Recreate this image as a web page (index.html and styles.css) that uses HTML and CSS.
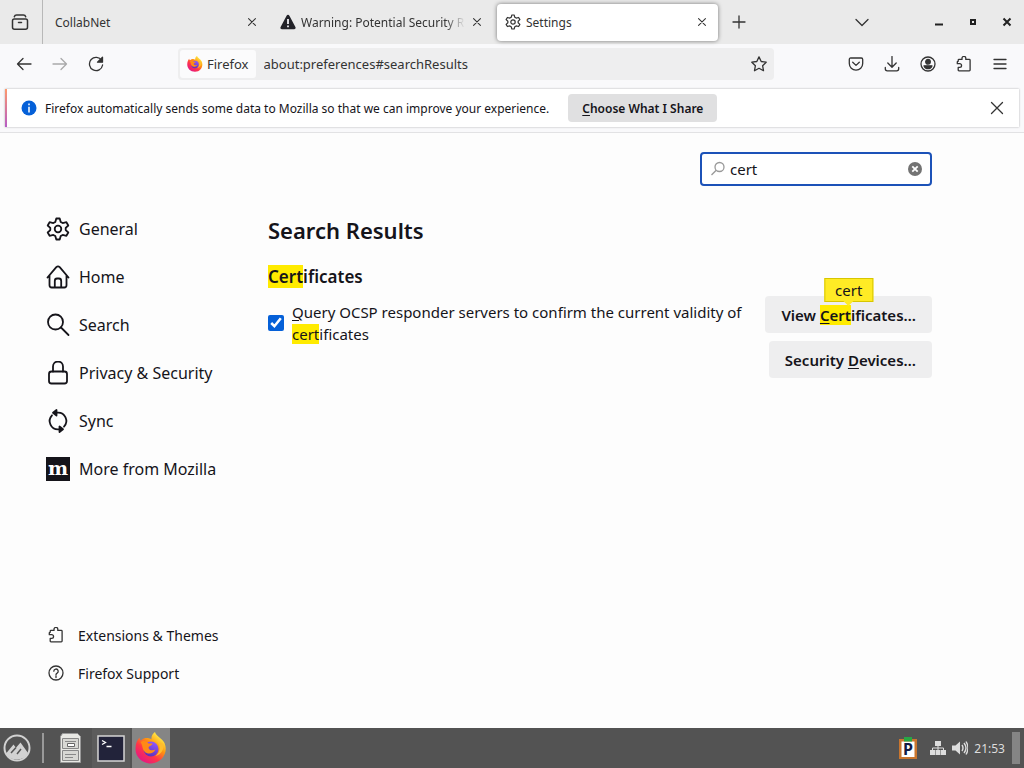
FILE: index.html
```html
<!DOCTYPE html>
<html lang="en">
<head>
    <meta charset="UTF-8">
    <meta name="viewport" content="width=device-width, initial-scale=1.0">
    <title>Settings</title>
    <link rel="stylesheet" href="styles.css">
</head>
<body>
    <!-- shared icons -->
    <svg class="sprite" aria-hidden="true">
        <symbol id="close" viewBox="0 0 16 16"><path d="M2.500 2.500l11 11M13.500 2.500l-11 11"/></symbol>
        <symbol id="gear" viewBox="0 0 24 24">
            <path d="M10.300 1.500h3.400l1 3.400 2 1.200 3.700-.9 1.900 3.300-2.600 2.400v2.200l2.600 2.400-1.900 3.300-3.700-.9-2 1.200-1 3.400h-3.400l-1-3.400-2-1.200-3.700.9-1.900-3.300 2.600-2.400v-2.200L1.700 8.500l1.900-3.300 3.700.9 2-1.200z"/>
            <circle cx="12" cy="12" r="3.300"/>
        </symbol>
        <symbol id="puzzle" viewBox="0 0 16 16">
            <path d="M2.200 5.300V4.200q0-.8.800-.8h3V2.300a1.900 1.900 0 0 1 3.800 0v1.100h3.500q.8 0 .8.800v9.800q0 .8-.8.800H3q-.8 0-.8-.8v-2.600h1.500a1.600 1.600 0 0 0 0-3.700H1.300V5.800q0-.5.900-.5z"/>
        </symbol>
        <symbol id="firefox" viewBox="0 0 32 32">
            <defs>
                <linearGradient id="fox-body" x1=".85" y1=".1" x2=".2" y2=".95">
                    <stop offset="0" stop-color="#fff44f"/>
                    <stop offset=".35" stop-color="#ff980e"/>
                    <stop offset=".65" stop-color="#ff3647"/>
                    <stop offset="1" stop-color="#e31587"/>
                </linearGradient>
                <linearGradient id="fox-globe" x1=".7" y1="0" x2=".3" y2="1">
                    <stop offset="0" stop-color="#9059ff"/>
                    <stop offset="1" stop-color="#5b30b5"/>
                </linearGradient>
            </defs>
            <path fill="url(#fox-body)" d="M20 0c1 4 7 6 9.500 11 4 9-2 20-13.500 20.500C7 31.500.5 25 .5 17 .5 12 2 8 4.500 5.500c0 1.500.5 2.500 1.500 3 2-2 4-2.500 5.500-2.500 2 0 4 .5 5 1.500C16 4.500 17.500 1.500 20 0z"/>
            <circle cx="16" cy="17" r="7.500" fill="url(#fox-globe)"/>
            <path fill="#ff8a16" d="M5.500 10c3-2 6.500-1 8 1.500h4c-.2 2-3.500 2.500-4 4 .5 3 4 3.500 7 2-2 4.500-8 5.500-11 2C7 17 8 13.500 5.500 10z"/>
            <path fill="#ffbd2f" d="M21 8c5 4 5 12-.5 16 6-1.500 9-7 7.500-12.500-1 0-2-.5-2.500-1.500 0 1 0 2-.5 2.500C24.500 10.500 23 9 21 8z"/>
        </symbol>
    </svg>

    <header class="browser">
        <div class="tab-bar">
            <button class="view-button" aria-label="Firefox View">
                <svg class="icon" viewBox="0 0 18 18"><path d="M3.300 3.800q.5-1.800 2.300-1.800h6.800q1.800 0 2.300 1.800M3.300 6h11.400q1.800 0 1.800 1.800v6.400q0 2-2 2h-11q-2 0-2-2V7.800Q1.500 6 3.300 6zM7.500 9.500h3"/></svg>
            </button>
            <div class="tab">
                <span class="tab-title">CollabNet</span>
                <button class="tab-close" aria-label="Close tab"><svg class="icon"><use href="#close"/></svg></button>
            </div>
            <div class="tab">
                <svg class="tab-icon warning" viewBox="0 0 16 16"><path fill="#222228" d="M8 .8q.9 0 1.400.9l6 11.300q.8 2-1.200 2.200H1.800Q-.2 15 .6 13l6-11.300Q7.100.8 8 .8z"/><path stroke="#f0f0f4" stroke-width="1.800" d="M8 5v5M8 11.500v1.800"/></svg>
                <span class="tab-title">Warning: Potential Security Risk</span>
                <button class="tab-close" aria-label="Close tab"><svg class="icon"><use href="#close"/></svg></button>
            </div>
            <div class="tab active">
                <svg class="tab-icon icon"><use href="#gear"/></svg>
                <span class="tab-title">Settings</span>
                <button class="tab-close" aria-label="Close tab"><svg class="icon"><use href="#close"/></svg></button>
            </div>
            <button class="new-tab" aria-label="New tab"><svg class="icon" viewBox="0 0 14 14"><path d="M7 1v12M1 7h12"/></svg></button>
            <button class="all-tabs" aria-label="List all tabs"><svg class="icon" viewBox="0 0 14 14"><path d="M1 4.500l6 6 6-6"/></svg></button>
            <div class="window-buttons">
                <button aria-label="Minimize"><svg viewBox="0 0 10 10"><path d="M1 7.500h8" stroke="#222" stroke-width="2"/></svg></button>
                <button aria-label="Maximize"><svg viewBox="0 0 10 10"><path d="M3 3h4v4H3z" fill="none" stroke="#222" stroke-width="2"/></svg></button>
                <button aria-label="Close"><svg viewBox="0 0 10 10"><path d="M1.500 1.500l7 7M8.500 1.500l-7 7" stroke="#222" stroke-width="2"/></svg></button>
            </div>
        </div>

        <div class="toolbar">
            <button aria-label="Back"><svg class="icon" viewBox="0 0 16 16"><path d="M15 8H1.500M7 2.500L1.500 8 7 13.500"/></svg></button>
            <button aria-label="Forward" disabled><svg class="icon" viewBox="0 0 16 16"><path d="M1 8h13.500M9 2.500L14.500 8 9 13.500"/></svg></button>
            <button aria-label="Reload"><svg class="icon" viewBox="0 0 16 16"><path d="M13.700 4.500A6.600 6.600 0 1 0 14.600 9"/><path d="M14.500 1.200v5h-5z" fill="#333"/></svg></button>
            <div class="urlbar">
                <button class="identity"><svg class="fox"><use href="#firefox"/></svg>Firefox</button>
                <input class="url" type="text" aria-label="Address" value="about:preferences#searchResults">
                <button class="star" aria-label="Bookmark"><svg class="icon" viewBox="0 0 16 16"><path d="M8 .9l2.200 4.600 5 .7-3.600 3.500.9 5L8 12.300l-4.500 2.400.9-5L.8 6.200l5-.7z"/></svg></button>
            </div>
            <button aria-label="Pocket"><svg class="icon" viewBox="0 0 16 16"><path d="M2.700 2h10.600q1.400 0 1.400 1.400v4.100a6.700 6.700 0 0 1-13.400 0V3.400Q1.300 2 2.700 2zM4.700 6.300L8 9.400l3.300-3.100"/></svg></button>
            <button aria-label="Downloads"><svg class="icon" viewBox="0 0 16 16"><path d="M8 .5v10.500M3.800 7L8 11.200 12.200 7M1.300 11.500v1.300q0 2 2 2h9.400q2 0 2-2v-1.300"/></svg></button>
            <button aria-label="Account"><svg class="icon" viewBox="0 0 16 16"><circle cx="8" cy="8" r="7"/><circle cx="8" cy="5.800" r="2.300" fill="#333"/><path fill="#333" d="M4 9.800h8q-1 2.900-4 2.900t-4-2.900z"/></svg></button>
            <button aria-label="Extensions"><svg class="icon"><use href="#puzzle"/></svg></button>
            <button aria-label="Menu"><svg class="icon" viewBox="0 0 16 16"><path d="M2 3.500h12M2 8h12M2 12.500h12"/></svg></button>
        </div>

        <div class="notice">
            <svg class="info" viewBox="0 0 16 16"><circle cx="8" cy="8" r="7.500" fill="#0560d8"/><path d="M8 3.500v1.700M8 6.700v5.800" stroke="#fff" stroke-width="1.500"/></svg>
            <span>Firefox automatically sends some data to Mozilla so that we can improve your experience.</span>
            <button class="share"><u>C</u>hoose What I Share</button>
            <button class="dismiss" aria-label="Dismiss"><svg class="icon"><use href="#close"/></svg></button>
        </div>
    </header>

    <div class="page">
        <aside class="sidebar">
            <nav class="categories">
                <a href="#general"><svg class="icon"><use href="#gear"/></svg>General</a>
                <a href="#home"><svg class="icon" viewBox="0 0 24 24"><path d="M1.500 12.500L10.300 2.200q1.700-1.600 3.400 0l8.800 10.300M3.500 10.500v9.800q0 2.200 2.200 2.200h12.600q2.200 0 2.200-2.200v-9.800M8.800 22v-6q0-2.500 2.200-2.500h2q2.200 0 2.200 2.500v6"/></svg>Home</a>
                <a href="#search"><svg class="icon" viewBox="0 0 24 24"><circle cx="9.500" cy="9" r="7.500"/><path d="M15 14.500l7.500 7.500"/></svg>Search</a>
                <a href="#privacy"><svg class="icon" viewBox="0 0 24 24"><rect x="3" y="10.500" width="18" height="12" rx="2.500"/><path d="M7 10.500v-5a5 5 0 0 1 10 0v5"/></svg>Privacy &amp; Security</a>
                <a href="#sync"><svg class="icon" viewBox="0 0 24 24"><path d="M9 3.700h2.500a8.300 8.300 0 0 1 6.500 14M15 20.300h-2.500A8.300 8.300 0 0 1 6 6.300"/><path fill="#15141a" d="M10.500 1v5.600L7 3.700zM13.500 17.500V23l3.500-2.700z"/></svg>Sync</a>
                <a href="#more"><svg viewBox="0 0 24 24"><path fill="#15141a" d="M0 0h24v24H0z"/><text class="m-logo" x="12" y="18" text-anchor="middle">m</text></svg>More from Mozilla</a>
            </nav>
            <nav class="links">
                <a href="#addons"><svg class="icon"><use href="#puzzle"/></svg>Extensions &amp; Themes</a>
                <a href="#support"><svg class="icon" viewBox="0 0 16 16"><circle cx="8" cy="8" r="7"/><path d="M5.800 6.200a2.200 2.200 0 1 1 3.300 1.900q-1.100.6-1.100 1.700M8 11v1.500"/></svg>Firefox Support</a>
            </nav>
        </aside>

        <main class="content">
            <div class="search-box">
                <svg class="magnifier" viewBox="0 0 16 16"><circle cx="9.500" cy="6" r="4.500"/><path d="M6.200 9.300L1.500 14"/></svg>
                <input type="text" aria-label="Find in Settings" value="cert">
                <button class="clear" aria-label="Clear"><svg viewBox="0 0 14 14"><circle cx="7" cy="7" r="7" fill="#737373"/><path d="M4.300 4.300l5.400 5.400M9.700 4.300L4.300 9.700" stroke="#fff" stroke-width="1.800"/></svg></button>
            </div>
            <h1>Search Results</h1>
            <h2><mark>Cert</mark>ificates</h2>
            <div class="setting">
                <div class="ocsp">
                    <input type="checkbox" id="ocsp" checked>
                    <label for="ocsp"><u>Q</u>uery OCSP responder servers to confirm the current validity of <mark>cert</mark>ificates</label>
                </div>
                <div class="actions">
                    <div class="found">
                        <button class="action">View <mark><u>C</u>ert</mark>ificates…</button>
                        <span class="bubble">cert</span>
                    </div>
                    <button class="action">Security <u>D</u>evices…</button>
                </div>
            </div>
        </main>
    </div>

    <footer class="taskbar">
        <button class="start" aria-label="Menu"><svg viewBox="0 0 28 28"><circle cx="14" cy="14" r="12.500" fill="none" stroke="#d2d2d2" stroke-width="2"/><path fill="#d2d2d2" d="M3 19.500l7.500-9 2.500 3.200 4.500-5.200 7.500 10.500q-3 6.500-11 6.500T3 19.500z"/><path d="M8 19l5-5.500M14 20l4-5" stroke="#555" stroke-width="1.500"/></svg></button>
        <span class="divider"></span>
        <button class="task" aria-label="Files"><svg viewBox="0 0 32 32"><path fill="#e8e8e4" stroke="#999" d="M7.500 1.500h15l3 3v26h-20v-26z"/><path fill="#d8d8d4" stroke="#888" d="M7.500 6.500h16v10h-16zM7.500 18.500h16v10h-16z"/><path stroke="#888" d="M10 9.500h11M10 22.500h11M10 25.500h8"/><path fill="#fff" stroke="#666" d="M12.500 11.500h7v3h-7z"/></svg></button>
        <button class="task open" aria-label="Terminal"><svg viewBox="0 0 32 32"><path fill="#22233a" stroke="#d5d5d5" stroke-width="1.500" d="M3 4h26v25H3z"/><path fill="none" stroke="#fff" stroke-width="1.300" d="M7 8.500l3.500 2L7 12.500M11.500 14.500h5"/></svg></button>
        <button class="task current" aria-label="Firefox"><svg><use href="#firefox"/></svg></button>
        <div class="tray">
            <svg class="clipboard" viewBox="0 0 20 22"><path fill="#c9762f" d="M1 2h18v20H1z"/><path fill="#fff" d="M3.500 4.500h13V20h-13z"/><path fill="#28a745" d="M6 0h8v4.500H6z"/><text x="10" y="18" text-anchor="middle">P</text></svg>
            <svg class="network" viewBox="0 0 16 16"><path fill="#ddd" d="M5 1h6v5H5zM0 10h5v5H0zM5.500 10h5v5h-5zM11 10h5v5h-5z"/><path fill="none" stroke="#ddd" d="M8 6v4M2.500 10V8h11v2"/></svg>
            <svg class="volume" viewBox="0 0 16 16"><path fill="#ddd" d="M0 5.500h3.500L8 1.500v13l-4.500-4H0z"/><path fill="none" stroke="#ddd" stroke-width="1.400" d="M10 5q2 3 0 6M12 3q4 5 0 10M14 1.500q4 6.500 0 13"/></svg>
            <time>21:53</time>
            <span class="show-desktop"></span>
        </div>
    </footer>
</body>
</html>
```

FILE: styles.css
```css
* {
    box-sizing: border-box;
}
body {
    margin: 0;
    min-height: 100vh;
    display: flex;
    flex-direction: column;
    font-family: "Noto Sans", sans-serif;
    color: #15141a;
    background: #fdfdfd;
}
button {
    display: flex;
    align-items: center;
    justify-content: center;
    padding: 0;
    border: none;
    background: none;
    font: inherit;
    color: inherit;
}
input {
    font: inherit;
    color: inherit;
}
a {
    color: inherit;
    text-decoration: none;
}
u {
    text-underline-offset: 2px;
}
mark {
    color: inherit;
    background: #ffeb00;
}
.sprite {
    position: absolute;
    width: 0;
    height: 0;
}
.icon {
    width: 16px;
    height: 16px;
    fill: none;
    stroke: #333;
    stroke-width: 1.3;
    stroke-linecap: round;
    stroke-linejoin: round;
}

/* tabs */
.browser {
    font-size: 12px;
    background: #f9f9fb;
    border-bottom: 1px solid #e2e2e4;
}
.tab-bar {
    display: flex;
    align-items: center;
    height: 44px;
    background: #eaeaea;
}
.view-button {
    flex: none;
    width: 43px;
    height: 44px;
    padding-right: 2px;
    margin-right: 2px;
    border-right: 1px solid #b8b8b8;
}
.view-button .icon {
    width: 18px;
    height: 18px;
    stroke-width: 1.5;
}
.tab {
    display: flex;
    align-items: center;
    flex: 0 1 221px;
    min-width: 0;
    height: 37px;
    margin: 0 2px;
    padding: 0 4px 0 8px;
    border-radius: 4px;
    color: #333;
}
.tab.active {
    background: #fff;
    box-shadow: 0 0 4px rgba(0, 0, 0, 0.5);
}
.tab-icon {
    flex: none;
    width: 16px;
    height: 16px;
    margin-right: 5px;
    stroke-width: 1.8;
}
.tab-title {
    flex: 1;
    overflow: hidden;
    white-space: nowrap;
}
.warning + .tab-title {
    -webkit-mask-image: linear-gradient(to left, transparent, #000 20px);
    mask-image: linear-gradient(to left, transparent, #000 20px);
}
.tab-close {
    flex: none;
    width: 24px;
    height: 24px;
}
.tab-close .icon {
    width: 10px;
    height: 10px;
    stroke-width: 1.7;
}
.new-tab {
    width: 38px;
    height: 36px;
}
.new-tab .icon,
.all-tabs .icon {
    width: 14px;
    height: 14px;
}
.all-tabs {
    width: 36px;
    height: 36px;
    margin-left: auto;
    margin-right: 42px;
}
.window-buttons {
    display: flex;
}
.window-buttons button {
    width: 34px;
    height: 34px;
}
.window-buttons svg {
    width: 10px;
    height: 10px;
}

/* toolbar */
.toolbar {
    display: flex;
    align-items: center;
    height: 44px;
    padding: 0 6px;
    padding-bottom: 4px;
}
.toolbar > button {
    width: 36px;
    height: 32px;
}
.toolbar > button:disabled {
    opacity: 0.4;
}
.urlbar {
    flex: 1;
    display: flex;
    align-items: center;
    height: 32px;
    margin: 0 64px;
    padding: 2px;
    border-radius: 4px;
    background: #eeeeef;
    color: #333;
    font-size: 13px;
}
.identity {
    height: 28px;
    padding: 0 7px;
    border-radius: 3px;
    background: #fbfbfc;
}
.fox {
    width: 16px;
    height: 16px;
    margin-right: 4px;
}
.url {
    flex: 1;
    min-width: 0;
    padding: 0 8px;
    border: none;
    background: none;
}
.star {
    width: 26px;
    height: 28px;
}

/* data sharing notice */
.notice {
    display: flex;
    align-items: center;
    height: 38px;
    margin: 1px 5px 5px;
    padding: 0 10px 0 14px;
    border-left: 2px solid;
    border-image: linear-gradient(#ff9a6a, #b45ac8) 1;
    background: #fff;
    box-shadow: 0 0 2px rgba(0, 0, 0, 0.3);
}
.info {
    width: 16px;
    height: 16px;
    margin-right: 8px;
}
.share {
    height: 28px;
    margin-left: 19px;
    padding: 0 14px;
    border-radius: 4px;
    background: #e0e0e1;
    font-weight: 600;
}
.dismiss {
    width: 24px;
    height: 24px;
    margin-left: auto;
}

/* settings page */
.page {
    flex: 1;
    display: flex;
    font-size: 15px;
}
.sidebar {
    display: flex;
    flex-direction: column;
    justify-content: space-between;
    flex: none;
    width: 268px;
    padding: 72px 0 36px 46px;
}
.sidebar a {
    display: flex;
    align-items: center;
}
.categories a {
    height: 48px;
    gap: 9px;
    font-size: 16px;
}
.categories svg {
    width: 24px;
    height: 24px;
    stroke: #15141a;
    stroke-width: 1.8;
}
.categories .m-logo {
    font: bold 19px "DejaVu Serif", serif;
    fill: #fff;
    stroke: none;
}
.links a {
    height: 38px;
    gap: 14px;
    padding-left: 2px;
    font-size: 14px;
}
.content {
    flex: 1;
    max-width: 664px;
    padding-top: 19px;
}
.search-box {
    display: flex;
    align-items: center;
    width: 232px;
    height: 34px;
    margin-left: auto;
    padding: 0 8px;
    border: 2px solid #1c52b8;
    border-radius: 4px;
    background: #fff;
}
.magnifier {
    flex: none;
    width: 16px;
    height: 16px;
    fill: none;
    stroke: #999;
    stroke-width: 1.3;
}
.search-box input {
    flex: 1;
    min-width: 0;
    padding: 0 4px;
    border: none;
    outline: none;
    background: none;
}
.clear svg {
    width: 14px;
    height: 14px;
}
h1 {
    margin: 28px 0 0;
    font-size: 22px;
    line-height: 32px;
    font-weight: 600;
}
h2 {
    margin: 19px 0 0;
    font-size: 17px;
    line-height: 24px;
    font-weight: 600;
}
.setting {
    display: flex;
    justify-content: space-between;
    gap: 16px;
    margin-top: 7px;
}
.ocsp {
    display: flex;
    align-items: center;
    align-self: flex-start;
    gap: 8px;
    padding-top: 5px;
    line-height: 22px;
}
.ocsp input {
    flex: none;
    width: 16px;
    height: 16px;
    margin: 0;
    accent-color: #0560d8;
}
.actions {
    display: flex;
    flex-direction: column;
    align-items: flex-end;
    flex: none;
    gap: 8px;
}
.action {
    display: block;
    height: 37px;
    padding: 0 16px;
    border-radius: 4px;
    background: #eeeeef;
    font-weight: 600;
}
.found {
    position: relative;
}
/* match tooltip, hangs over the top of its button */
.bubble {
    position: absolute;
    left: 50%;
    bottom: 31px;
    transform: translateX(-50%);
    padding: 0 10px;
    border: 1px solid #d7c600;
    background: #ffeb25;
    line-height: 22px;
}
.bubble::after {
    content: "";
    position: absolute;
    top: 100%;
    left: 50%;
    margin-left: -5px;
    border: 5px solid transparent;
    border-top-color: #ffeb25;
    border-bottom: none;
}

/* desktop panel */
.taskbar {
    display: flex;
    align-items: center;
    height: 40px;
    background: #535353;
    color: #ddd;
    font-size: 12px;
}
.start svg {
    width: 28px;
    height: 28px;
    margin-left: 3px;
}
.divider {
    width: 2px;
    height: 30px;
    margin: 0 8px 0 11px;
    background: #999;
}
.task {
    width: 38px;
    height: 40px;
    margin-right: 2px;
}
.task svg {
    width: 32px;
    height: 32px;
}
.task.open {
    background: #5c5c5c;
}
.task.current {
    background: #858585;
}
.tray {
    display: flex;
    align-items: center;
    margin-left: auto;
}
.clipboard {
    width: 20px;
    height: 22px;
    margin-right: 12px;
}
.clipboard text {
    font: bold 16px "Noto Sans", sans-serif;
    fill: #111a44;
}
.network,
.volume {
    width: 16px;
    height: 16px;
    margin-right: 6px;
}
.show-desktop {
    width: 8px;
    height: 32px;
    margin: 0 4px 0 7px;
    background: #858585;
}
```
